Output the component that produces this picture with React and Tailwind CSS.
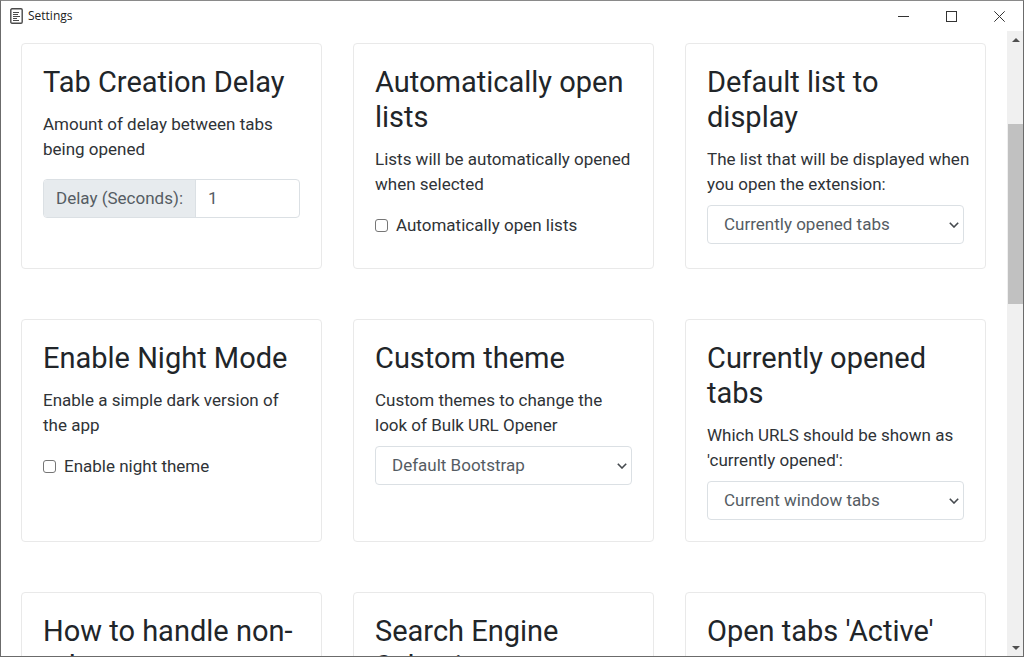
import { useId } from "react";

function Card({ title, text, children }) {
  return (
    <section className="rounded border border-[#e9e9e9] bg-white p-[21px]">
      <h2 className="mb-3 text-[29px] leading-[35px] text-[#212529]">{title}</h2>
      {text && <p className="-mr-[6px] leading-[25px]">{text}</p>}
      {children}
    </section>
  );
}

function CheckField({ label }) {
  return (
    <label className="mt-4 mb-[9px] flex items-center gap-2 leading-[25px]">
      <input
        type="checkbox"
        className="size-[13px] shrink-0 appearance-none rounded-[3px] border border-[#767676] bg-white checked:bg-[#0075ff]"
      />
      {label}
    </label>
  );
}

function SelectField({ label, options }) {
  return (
    <div className="relative mt-2">
      <select
        aria-label={label}
        className="block h-[39px] w-full appearance-none rounded border border-[#dbe0e4] bg-white pr-8 pl-4 text-[#555c63]"
      >
        {options.map((option) => (
          <option key={option}>{option}</option>
        ))}
      </select>
      <svg
        viewBox="0 0 10 6"
        className="pointer-events-none absolute top-[17px] right-[5px] h-[6px] w-[10px]"
        fill="none"
        stroke="#45494e"
        strokeWidth="1.6"
      >
        <path d="M0.8 0.8 5 5 9.2 0.8" />
      </svg>
    </div>
  );
}

function DelayField() {
  const id = useId();
  return (
    <div className="mt-[17px] flex h-[39px] overflow-hidden rounded border border-[#dbe0e4]">
      <label
        htmlFor={id}
        className="flex shrink-0 items-center border-r border-[#dbe0e4] bg-[#e7ebee] px-3 text-[#555c63]"
      >
        Delay (Seconds):
      </label>
      <input id={id} type="text" inputMode="numeric" defaultValue="1" className="w-full min-w-0 px-3 text-[#555c63]" />
    </div>
  );
}

function TitleBar() {
  return (
    <header className="flex h-[30px] shrink-0 items-center pl-[9px]">
      <svg viewBox="0 0 13 16" className="h-4 w-[13px]" fill="none" stroke="#4a4a4a">
        <rect x="0.8" y="0.8" width="11.4" height="14.4" rx="1.2" strokeWidth="1.4" />
        <path d="M3 4.5h6M3 6.5h5M3 8.5h7M3 10.5h4M3 12.5h6" strokeWidth="1" />
      </svg>
      <h1 className="ml-[5px] font-['Open_Sans','Noto_Sans',sans-serif] text-xs text-[#222]">Settings</h1>
      <div className="ml-auto flex h-full">
        <button aria-label="Minimize" className="flex w-12 items-center justify-center">
          <svg viewBox="0 0 11 11" className="size-[11px]" stroke="#333" fill="none">
            <path d="M0 5.5h11" />
          </svg>
        </button>
        <button aria-label="Maximize" className="flex w-12 items-center justify-center">
          <svg viewBox="0 0 11 11" className="size-[11px]" stroke="#333" fill="none">
            <rect x="0.5" y="0.5" width="10" height="10" />
          </svg>
        </button>
        <button aria-label="Close" className="flex w-12 items-center justify-center">
          <svg viewBox="0 0 11 11" className="size-[11px]" stroke="#333" fill="none">
            <path d="M0.3 0.3l10.4 10.4M10.7 0.3L0.3 10.7" />
          </svg>
        </button>
      </div>
    </header>
  );
}

function ScrollBar() {
  return (
    <div aria-hidden="true" className="flex w-4 shrink-0 flex-col bg-[#f0f0f0] pl-px">
      <div className="flex h-[17px] shrink-0 items-center justify-center">
        <svg viewBox="0 0 8 4" className="h-1 w-2" fill="#505050">
          <path d="M0 4 4 0l4 4z" />
        </svg>
      </div>
      <div className="grow-76" />
      <div className="grow-180 bg-[#c1c1c1]" />
      <div className="grow-335" />
      <div className="flex h-[17px] shrink-0 items-center justify-center">
        <svg viewBox="0 0 8 4" className="h-1 w-2" fill="#505050">
          <path d="M0 0 4 4l4-4z" />
        </svg>
      </div>
    </div>
  );
}

export default function App() {
  return (
    <div className="flex h-screen flex-col border border-[#6b6b6b] border-t-[#8a8a8a] bg-white font-[Roboto,sans-serif] text-[17px] text-[#2f3337]">
      <TitleBar />
      <div className="flex min-h-0 flex-1">
        <main className="flex-1 overflow-y-auto [scrollbar-width:none]">
          <div className="grid grid-cols-3 gap-x-[31px] gap-y-[50px] pt-3 pr-[21px] pb-12 pl-5">
            <Card title="Tab Creation Delay" text="Amount of delay between tabs being opened">
              <DelayField />
            </Card>
            <Card title="Automatically open lists" text="Lists will be automatically opened when selected">
              <CheckField label="Automatically open lists" />
            </Card>
            <Card title="Default list to display" text="The list that will be displayed when you open the extension:">
              <SelectField label="Default list to display" options={["Currently opened tabs"]} />
            </Card>
            <Card title="Enable Night Mode" text="Enable a simple dark version of the app">
              <CheckField label="Enable night theme" />
            </Card>
            <Card title="Custom theme" text="Custom themes to change the look of Bulk URL Opener">
              <SelectField label="Custom theme" options={["Default Bootstrap"]} />
            </Card>
            <Card title="Currently opened tabs" text="Which URLS should be shown as 'currently opened':">
              <SelectField label="Currently opened tabs" options={["Current window tabs"]} />
            </Card>
            <Card title="How to handle non-urls" />
            <Card title="Search Engine Selection" />
            <Card title="Open tabs 'Active'" />
          </div>
        </main>
        <ScrollBar />
      </div>
    </div>
  );
}
